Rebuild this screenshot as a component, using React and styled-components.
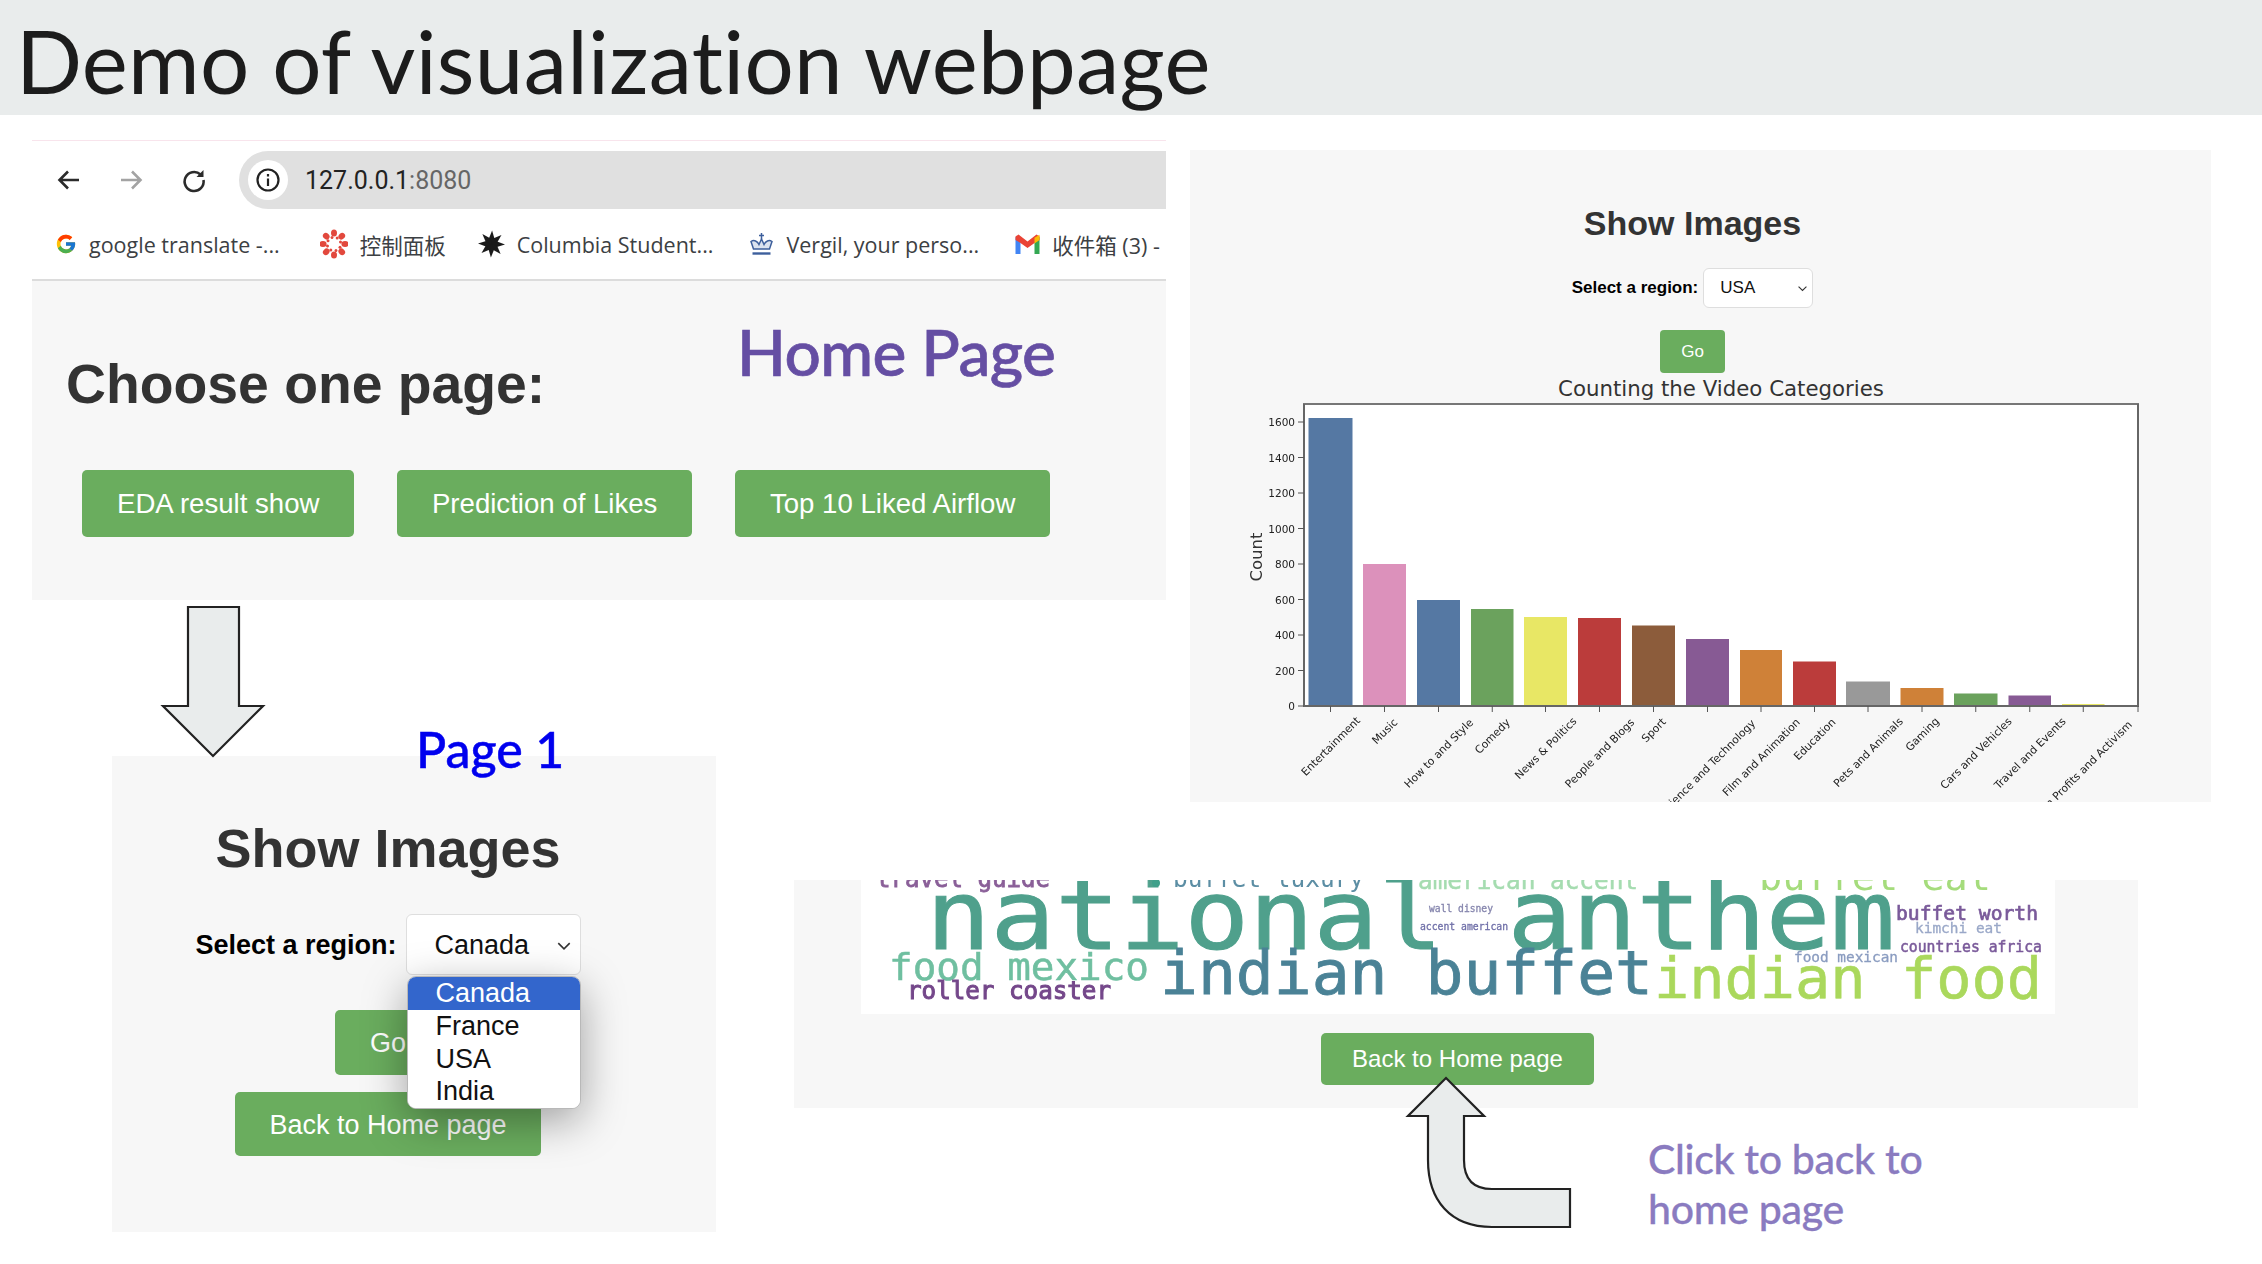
import React from 'react'
import styled, { createGlobalStyle } from 'styled-components'
import { FcGoogle } from 'react-icons/fc'

const GREEN = '#6aad5e'
const PANEL = '#f7f7f7'

const bars = [
	{ name: 'Entertainment', left: 1308.5, right: 1352.5, top: 418, color: '#5578a3', cy: 746 },
	{ name: 'Music', left: 1363, right: 1406, top: 564, color: '#dc91bb', cy: 731 },
	{ name: 'How to and Style', left: 1417, right: 1460, top: 600, color: '#5578a3', cy: 753 },
	{ name: 'Comedy', left: 1471, right: 1513.5, top: 609, color: '#6ba25d', cy: 736 },
	{ name: 'News & Politics', left: 1524, right: 1567, top: 617, color: '#e8e765', cy: 748 },
	{ name: 'People and Blogs', left: 1578, right: 1621, top: 618, color: '#bb3c3b', cy: 753 },
	{ name: 'Sport', left: 1632, right: 1675, top: 625.5, color: '#8c5c3b', cy: 730 },
	{ name: 'Science and Technology', left: 1686, right: 1729, top: 639, color: '#875a94', cy: 767 },
	{ name: 'Film and Animation', left: 1740, right: 1782, top: 650, color: '#cf8138', cy: 757 },
	{ name: 'Education', left: 1793, right: 1836, top: 661.5, color: '#bb3c3b', cy: 739 },
	{ name: 'Pets and Animals', left: 1846, right: 1890, top: 681.5, color: '#999999', cy: 752 },
	{ name: 'Gaming', left: 1900.5, right: 1943.5, top: 688, color: '#cf8138', cy: 734 },
	{ name: 'Cars and Vehicles', left: 1954, right: 1997.5, top: 693.5, color: '#6ba25d', cy: 753 },
	{ name: 'Travel and Events', left: 2008.5, right: 2051, top: 695.5, color: '#875a94', cy: 753 },
	{ name: 'Non Profits and Activism', left: 2062, right: 2104.5, top: 704, color: '#e8e765', cy: 769 }
]

const yTicks = [0, 200, 400, 600, 800, 1000, 1200, 1400, 1600]

const cloudWords = [
	{ text: 'travel guide', x: 875, y: 887, w: 174, size: 24, color: '#8a5f98', heavy: 0.8 },
	{ text: 'buffet luxury', x: 1172, y: 887, w: 191, size: 24, color: '#5c8ea4' },
	{ text: 'american accent', x: 1417, y: 889, w: 220, size: 24, color: '#a5dcb0', heavy: 0.5 },
	{ text: 'buffet eat', x: 1758, y: 890, w: 232, size: 38, color: '#a5dc7c' },
	{ text: 'national anthem', x: 925, y: 949, w: 969, size: 96, color: '#4fa08c', heavy: 1 },
	{ text: 'indian buffet', x: 1159, y: 994, w: 493, size: 60, color: '#4a8296', heavy: 0.8 },
	{ text: 'indian food', x: 1653, y: 998, w: 388, size: 57, color: '#aad85c', heavy: 0.6 },
	{ text: 'food mexico', x: 888, y: 980, w: 260, size: 38, color: '#6fbfa0', heavy: 0.5 },
	{ text: 'roller coaster', x: 906, y: 999, w: 204, size: 24, color: '#74478a', heavy: 1 },
	{ text: 'wall disney', x: 1428, y: 912, w: 64, size: 10, color: '#8585ad', heavy: 0.3 },
	{ text: 'accent american', x: 1419, y: 930, w: 88, size: 10, color: '#6f6fa8', heavy: 0.3 },
	{ text: 'buffet worth', x: 1895, y: 920, w: 142, size: 20, color: '#7a5a9a', heavy: 0.7 },
	{ text: 'kimchi eat', x: 1914, y: 933, w: 87, size: 14.5, color: '#9aa8c8', heavy: 0.3 },
	{ text: 'countries africa', x: 1899, y: 952, w: 142, size: 15, color: '#7a5a9a', heavy: 0.5 },
	{ text: 'food mexican', x: 1793, y: 962, w: 104, size: 14.5, color: '#8a9cc0', heavy: 0.3 }
]

const GlobalStyle = createGlobalStyle`
	html, body {
		margin: 0;
		padding: 0;
		background: #fff;
		font-family: 'Liberation Sans', Arial, sans-serif;
	}
`

const Slide = styled.div`
	position: relative;
	width: 2262px;
	height: 1264px;
	overflow: hidden;
	background: #fff;
	display: grid;
	grid-template-columns: 32px 80px 604px 78px 372px 24px 948px 73px 51px;
	grid-template-rows: 115px 25px 10px 450px 156px 46px 78px 228px 124px 32px;
`

const Header = styled.header`
	grid-column: 1 / -1;
	grid-row: 1;
	background: #e9ecec;
	display: flex;
	align-items: center;
	padding: 6px 0 0 16px;
	box-sizing: border-box;
`

const Title = styled.h1`
	margin: 0;
	font-family: 'Lato', sans-serif;
	font-weight: 400;
	font-size: 87px;
	line-height: 105px;
	letter-spacing: 0.3px;
	color: #1c1c1c;
	white-space: nowrap;
`

const HomePanel = styled.section`
	position: relative;
	grid-column: 2 / 6;
	grid-row: 3 / 5;
	background: ${PANEL};
	display: flex;
	flex-direction: column;
	overflow: hidden;
`

const BrowserBar = styled.div`
	background: #fff;
	border-top: 1px solid #f8e4ec;
	border-bottom: 2px solid #dcdcdc;
	height: 138px;
	box-sizing: content-box;
	flex-shrink: 0;
	display: flex;
	flex-direction: column;
`

const NavRow = styled.div`
	display: flex;
	align-items: center;
	height: 58px;
	margin-top: 10px;
	padding-left: 23px;
`

const NavButton = styled.span`
	display: flex;
	width: 28px;
	height: 28px;
	margin-right: 34px;
	color: ${p => (p.$muted ? '#a3a3a3' : '#2b2b2b')};
	&:nth-child(2) {
		margin-right: 35px;
	}
	&:nth-child(3) {
		margin-right: 31px;
	}
`

const UrlBar = styled.div`
	flex: 1;
	height: 58px;
	background: #e0e0e0;
	border-radius: 29px 0 0 29px;
	display: flex;
	align-items: center;
	padding-left: 9px;
	gap: 17px;
`

const InfoBadge = styled.span`
	width: 40px;
	height: 40px;
	border-radius: 50%;
	background: #fff;
	display: flex;
	align-items: center;
	justify-content: center;
`

const UrlText = styled.span`
	font-family: 'Roboto', sans-serif;
	font-size: 25px;
	color: #222;
	span {
		color: #666;
	}
`

const Bookmarks = styled.div`
	display: flex;
	align-items: center;
	gap: 36px;
	height: 72px;
	padding-left: 23px;
	white-space: nowrap;
`

const Bookmark = styled.span`
	display: flex;
	align-items: center;
	gap: 12px;
	margin-right: ${p => p.$after || 0}px;
	font-family: 'Open Sans', 'Noto Sans CJK SC', sans-serif;
	font-size: 21.5px;
	color: #3c4043;
	svg {
		flex-shrink: 0;
	}
`

const HomeBody = styled.div`
	padding: 71px 0 0 34px;
`

const ChooseTitle = styled.h2`
	margin: 0;
	font-size: 55.3px;
	line-height: 64px;
	font-weight: 700;
	color: #333;
`

const HomeButtons = styled.div`
	display: flex;
	gap: 42.5px;
	margin: 54px 0 0 16px;
`

const GreenButton = styled.button`
	background: ${GREEN};
	color: #fff;
	border: 0;
	border-radius: ${p => p.$radius || 5}px;
	font-family: 'Liberation Sans', Arial, sans-serif;
	font-size: ${p => p.$size}px;
	height: ${p => p.$height}px;
	padding: ${p => p.$nudge || 0}px ${p => p.$pad}px 0;
	white-space: nowrap;
`

const Annotation = styled.div`
	position: absolute;
	left: ${p => p.$x}px;
	top: ${p => p.$y}px;
	font-family: 'Lato', sans-serif;
	font-weight: 500;
	font-size: ${p => p.$size}px;
	line-height: ${p => p.$line}px;
	letter-spacing: ${p => p.$spacing || 0}px;
	color: ${p => p.$color};
	-webkit-text-stroke: ${p => p.$stroke || 0}px ${p => p.$color};
	white-space: nowrap;
	z-index: 3;
`

const ChartPanel = styled.section`
	grid-column: 7 / 9;
	grid-row: 4 / 7;
	background: ${PANEL};
	display: flex;
	flex-direction: column;
	overflow: hidden;
	padding-top: 53px;
`

const CenterRow = styled.div`
	display: flex;
	justify-content: center;
	padding-right: ${p => p.$offset || 16}px;
	margin-top: ${p => p.$top || 0}px;
`

const Heading = styled.h2`
	margin: 0;
	font-weight: 700;
	color: #333;
	font-size: ${p => p.$size}px;
	line-height: ${p => p.$line}px;
`

const RegionRow = styled.div`
	display: flex;
	align-items: center;
	gap: ${p => p.$gap}px;
	font-size: ${p => p.$size}px;
	color: #000;
`

const RegionLabel = styled.label`
	font-weight: 700;
	white-space: nowrap;
	padding-top: ${p => p.$nudge || 0}px;
`

const SelectBox = styled.div`
	position: relative;
	box-sizing: border-box;
	width: ${p => p.$width}px;
	height: ${p => p.$height}px;
	background: #fff;
	border: 1px solid #dedede;
	border-radius: 6px;
	display: flex;
	align-items: center;
	justify-content: space-between;
	padding: ${p => p.$nudge || 0}px ${p => p.$right}px 0 ${p => p.$left}px;
	color: #111;
`

const Dropdown = styled.ul`
	position: absolute;
	top: 61px;
	left: 0;
	width: 174px;
	margin: 0;
	padding: 0;
	list-style: none;
	background: #fff;
	border: 1px solid #b8b8b8;
	border-radius: 9px;
	box-sizing: border-box;
	overflow: hidden;
	box-shadow: 0 12px 44px rgba(0, 0, 0, 0.36);
	z-index: 2;
`

const DropdownItem = styled.li`
	height: 32.8px;
	line-height: 32px;
	padding-left: 28px;
	font-size: 27px;
	background: ${p => (p.$active ? '#3366cc' : '#fff')};
	color: ${p => (p.$active ? '#fff' : '#111')};
`

const ChartTitle = styled.div`
	font-family: 'DejaVu Sans', sans-serif;
	font-size: 21.3px;
	line-height: 32px;
	margin-bottom: -5px;
	color: #333;
	text-align: center;
	padding-left: 41px;
	white-space: nowrap;
`

const ChartSvg = styled.svg`
	display: block;
	flex-shrink: 0;
	filter: blur(0.45px);
`

const PagePanel = styled.section`
	position: relative;
	grid-column: 3 / 4;
	grid-row: 6 / 10;
	background: ${PANEL};
	padding-top: 60px;
	display: flex;
	flex-direction: column;
`

const CloudPanel = styled.section`
	grid-column: 5 / 8;
	grid-row: 8 / 9;
	background: ${PANEL};
	display: flex;
	flex-direction: column;
	align-items: center;
	padding-right: 17px;
`

const CloudSvg = styled.svg`
	display: block;
	background: #fff;
	filter: blur(0.5px);
`

const CloudButtonWrap = styled.div`
	margin-top: 19px;
`

const Arrow = styled.svg`
	position: absolute;
	left: ${p => p.$x}px;
	top: ${p => p.$y}px;
	z-index: 2;
	fill: #e9ecec;
	stroke: #222;
	stroke-width: 2.2;
	stroke-linejoin: miter;
`

const Chevron = ({ size = 14 }) => (
	<svg width={size} height={size} viewBox="0 0 14 14" fill="none" stroke="#333" strokeWidth="1.4">
		<path d="M2 4.5 L7 9.5 L12 4.5" />
	</svg>
)

const CanvasIcon = () => (
	<svg width="28" height="30" viewBox="-14 -15 28 30" fill="#e2483d">
		{Array.from({ length: 8 }).map((_, i) => (
			<g key={i} transform={`rotate(${i * 45})`}>
				<ellipse cx="0" cy="-11" rx="3" ry="3.6" />
				<circle cx="3.2" cy="-6" r="1.5" />
			</g>
		))}
	</svg>
)

const ColumbiaIcon = () => (
	<svg width="27" height="28" viewBox="-13.5 -14 27 28" fill="#1a1a1a">
		<circle r="3" />
		{Array.from({ length: 8 }).map((_, i) => (
			<path key={i} transform={`rotate(${i * 45})`} d="M0.5 0 L-2.8 -5 L0.6 -13.5 L3.2 -4.5 Z" />
		))}
	</svg>
)

const CrownIcon = () => (
	<svg width="25" height="24" viewBox="0 0 25 24" fill="none" stroke="#3d5f9c" strokeWidth="1.5">
		<path d="M4.5 17 L2 9.5 C5 7.5 8.5 9 10 12.5 L12.5 7 L15 12.5 C16.5 9 20 7.5 23 9.5 L20.5 17 Z" fill="#dbe3f0" />
		<path d="M12.5 1 V7 M10 3.5 H15" />
		<path d="M3.5 21.5 H21.5" strokeWidth="2.4" />
	</svg>
)

const GmailIcon = () => (
	<svg width="25" height="20" viewBox="0 0 24 20">
		<path d="M0 3 V20 H5 V7 Z" fill="#4285f4" />
		<path d="M24 3 V20 H19 V7 Z" fill="#34a853" />
		<path d="M0 2.5 L3 0.5 L12 7.5 L21 0.5 L24 2.5 V6 L19 9 L12 14 L5 9 L0 6 Z" fill="#ea4335" />
		<path d="M19 3.8 L24 0.8 V6 L19 9.5 Z" fill="#fbbc04" />
	</svg>
)

const App = () => (
	<>
		<GlobalStyle />
		<Slide>
			<Header>
				<Title>Demo of visualization webpage</Title>
			</Header>

			<HomePanel>
				<BrowserBar>
					<NavRow>
						<NavButton>
							<svg width="28" height="28" viewBox="0 0 28 28" fill="none" stroke="currentColor" strokeWidth="2.6">
								<path d="M24 14 H5 M13 5.5 L4.5 14 L13 22.5" />
							</svg>
						</NavButton>
						<NavButton $muted>
							<svg width="28" height="28" viewBox="0 0 28 28" fill="none" stroke="currentColor" strokeWidth="2.6">
								<path d="M4 14 H23 M15 5.5 L23.5 14 L15 22.5" />
							</svg>
						</NavButton>
						<NavButton>
							<svg width="28" height="28" viewBox="0 0 28 28" fill="none" stroke="currentColor" strokeWidth="2.6">
								<path d="M20.5 8.5 A9.5 9.5 0 1 0 23.5 14" />
								<path d="M23.5 4 V11 H16.5 Z" fill="currentColor" stroke="none" />
							</svg>
						</NavButton>
						<UrlBar>
							<InfoBadge>
								<svg width="26" height="26" viewBox="0 0 26 26" fill="none" stroke="#222" strokeWidth="2.2">
									<circle cx="13" cy="13" r="10.5" />
									<path d="M13 11.5 V19 M13 7 V9.5" />
								</svg>
							</InfoBadge>
							<UrlText>
								127.0.0.1<span>:8080</span>
							</UrlText>
						</UrlBar>
					</NavRow>
					<Bookmarks>
						<Bookmark $after={4}>
							<FcGoogle size={22} />
							google translate -...
						</Bookmark>
						<Bookmark $after={-4}>
							<CanvasIcon />
							控制面板
						</Bookmark>
						<Bookmark>
							<ColumbiaIcon />
							Columbia Student...
						</Bookmark>
						<Bookmark>
							<CrownIcon />
							Vergil, your perso...
						</Bookmark>
						<Bookmark>
							<GmailIcon />
							收件箱 (3) -
						</Bookmark>
					</Bookmarks>
				</BrowserBar>
				<HomeBody>
					<ChooseTitle>Choose one page:</ChooseTitle>
					<HomeButtons>
						<GreenButton $size={27.6} $height={67} $pad={35}>EDA result show</GreenButton>
						<GreenButton $size={27.6} $height={67} $pad={35}>Prediction of Likes</GreenButton>
						<GreenButton $size={27.6} $height={67} $pad={35}>Top 10 Liked Airflow</GreenButton>
					</HomeButtons>
				</HomeBody>
				<Annotation $x={705} $y={173} $size={64} $line={78} $spacing={-0.6} $stroke={0.7} $color="#654ea3">Home Page</Annotation>
			</HomePanel>

			<ChartPanel>
				<CenterRow>
					<Heading $size={34} $line={40}>Show Images</Heading>
				</CenterRow>
				<CenterRow $top={25}>
					<RegionRow $gap={5} $size={17}>
						<RegionLabel>Select a region:</RegionLabel>
						<SelectBox $width={110} $height={40} $left={16} $right={4}>
							USA
							<Chevron size={11} />
						</SelectBox>
					</RegionRow>
				</CenterRow>
				<CenterRow $top={22}>
					<GreenButton $size={17} $height={43} $pad={21} $radius={4}>Go</GreenButton>
				</CenterRow>
				<ChartTitle>Counting the Video Categories</ChartTitle>
				<ChartSvg width="1021" height="402" viewBox="1190 400 1021 402">
					<rect x="1304" y="404" width="834" height="302" fill="#fff" stroke="#777" strokeWidth="2" />
					{bars.map(b => (
						<rect key={b.name} x={b.left} y={b.top} width={b.right - b.left} height={706 - b.top} fill={b.color} />
					))}
					<path d="M1304 404 V706 H2138 V404" fill="none" stroke="#666" strokeWidth="2" />
					{yTicks.map(t => {
						const y = 706 - t * 0.1775
						return (
							<g key={t}>
								<line x1="1298" x2="1304" y1={y} y2={y} stroke="#555" strokeWidth="1" />
								<text x="1295" y={y + 4} textAnchor="end" fontFamily="DejaVu Sans" fontSize="10.5" fill="#222">{t}</text>
							</g>
						)
					})}
					{bars.map(b => {
						const cx = (b.left + b.right) / 2
						return (
							<g key={b.name}>
								<line x1={cx} x2={cx} y1="706" y2="712" stroke="#555" strokeWidth="1" />
								<text
									x={cx}
									y={b.cy + 4}
									textAnchor="middle"
									fontFamily="DejaVu Sans"
									fontSize="10.8"
									fill="#222"
									transform={`rotate(-45 ${cx} ${b.cy})`}
								>
									{b.name}
								</text>
							</g>
						)
					})}
					<line x1="2138" x2="2138" y1="706" y2="712" stroke="#555" strokeWidth="1" />
					<text
						x="1262"
						y="557"
						textAnchor="middle"
						fontFamily="DejaVu Sans"
						fontSize="16.5"
						fill="#333"
						transform="rotate(-90 1262 557)"
					>
						Count
					</text>
				</ChartSvg>
			</ChartPanel>

			<PagePanel>
				<CenterRow $offset={52}>
					<Heading $size={54} $line={64}>Show Images</Heading>
				</CenterRow>
				<CenterRow $offset={52} $top={34}>
					<RegionRow $gap={9} $size={27}>
						<RegionLabel $nudge={2}>Select a region:</RegionLabel>
						<SelectBox $width={175} $height={61} $left={28} $right={8} $nudge={2}>
							Canada
							<Chevron size={16} />
							<Dropdown>
								<DropdownItem $active>Canada</DropdownItem>
								<DropdownItem>France</DropdownItem>
								<DropdownItem>USA</DropdownItem>
								<DropdownItem>India</DropdownItem>
							</Dropdown>
						</SelectBox>
					</RegionRow>
				</CenterRow>
				<CenterRow $offset={52} $top={35}>
					<GreenButton $size={27} $height={65} $pad={35} $nudge={2}>Go</GreenButton>
				</CenterRow>
				<CenterRow $offset={52} $top={17}>
					<GreenButton $size={27} $height={64} $pad={34.5} $nudge={2}>Back to Home page</GreenButton>
				</CenterRow>
				<Annotation $x={304} $y={-38} $size={50} $line={62} $stroke={0.5} $color="#0000ee">Page 1</Annotation>
			</PagePanel>

			<CloudPanel>
				<CloudSvg width="1194" height="134" viewBox="860 880 1194 134">
					{cloudWords.map(w => (
						<text
							key={w.text}
							x={w.x}
							y={w.y}
							textLength={w.w}
							lengthAdjust="spacingAndGlyphs"
							fontFamily="DejaVu Sans Mono"
							fontSize={w.size}
							fill={w.color}
							stroke={w.color}
							strokeWidth={w.heavy || 0}
						>
							{w.text}
						</text>
					))}
					<circle cx="1155" cy="883" r="4" fill="#3fa08a" />
				</CloudSvg>
				<CloudButtonWrap>
					<GreenButton $size={24} $height={52} $pad={31}>Back to Home page</GreenButton>
				</CloudButtonWrap>
			</CloudPanel>

			<Arrow $x={160} $y={605} width="106" height="154" viewBox="160 605 106 154">
				<path d="M188 607 H239 V706 H263 L213 756 L163 706 H188 Z" />
			</Arrow>
			<Arrow $x={1404} $y={1075} width="170" height="156" viewBox="1404 1075 170 156">
				<path d="M1446 1078 L1484 1116 H1464 V1160 Q1464 1189 1492 1189 H1570 V1227 H1492 C1450 1227 1428 1200 1428 1160 V1116 H1408 Z" />
			</Arrow>
			<Annotation $x={1648} $y={1134} $size={41} $line={50} $spacing={-0.3} $stroke={0.3} $color="#8a7bc0">
				Click to back to
				<br />
				home page
			</Annotation>
		</Slide>
	</>
)

export default App
